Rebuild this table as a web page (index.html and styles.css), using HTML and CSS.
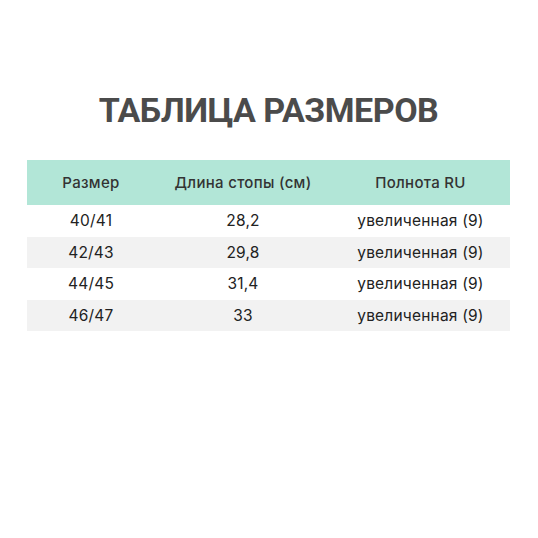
FILE: index.html
```html
<!DOCTYPE html>
<html lang="ru">
<head>
<meta charset="utf-8">
<link rel="stylesheet" href="styles.css">
</head>
<body>
<div class="page">
  <h1 class="title">ТАБЛИЦА РАЗМЕРОВ</h1>
  <div class="table">
    <div class="row head">
      <div class="c1">Размер</div><div class="c2">Длина стопы (см)</div><div class="c3">Полнота RU</div>
    </div>
    <div class="row">
      <div class="c1">40/41</div><div class="c2">28,2</div><div class="c3">увеличенная (9)</div>
    </div>
    <div class="row alt">
      <div class="c1">42/43</div><div class="c2">29,8</div><div class="c3">увеличенная (9)</div>
    </div>
    <div class="row">
      <div class="c1">44/45</div><div class="c2">31,4</div><div class="c3">увеличенная (9)</div>
    </div>
    <div class="row alt">
      <div class="c1">46/47</div><div class="c2">33</div><div class="c3">увеличенная (9)</div>
    </div>
  </div>
</div>
</body>
</html>
```

FILE: styles.css
```css
html, body {
  margin: 0;
  padding: 0;
  background: #ffffff;
}
.page {
  width: 538px;
  height: 538px;
  padding: 88px 28px 0 27px;
  box-sizing: border-box;
  font-family: Inter, "Liberation Sans", sans-serif;
}
.title {
  margin: 0 0 27px 0;
  text-align: center;
  font-family: Roboto, "Liberation Sans", sans-serif;
  font-size: 34px;
  line-height: 45px;
  font-weight: 700;
  color: #4b4b4b;
  letter-spacing: -0.5px;
}
.table {
  display: flex;
  flex-direction: column;
}
.row {
  display: grid;
  grid-template-columns: 128px 176px 1fr;
  height: 31.5px;
  align-items: center;
  text-align: center;
  font-size: 15.5px;
  color: #222;
  letter-spacing: 0.2px;
}
.row.head {
  height: 45px;
  background: #b2e6d7;
  font-size: 15px;
  font-weight: 500;
  color: #333;
  letter-spacing: 0.3px;
}
.row.alt {
  background: #f2f2f2;
}
```
